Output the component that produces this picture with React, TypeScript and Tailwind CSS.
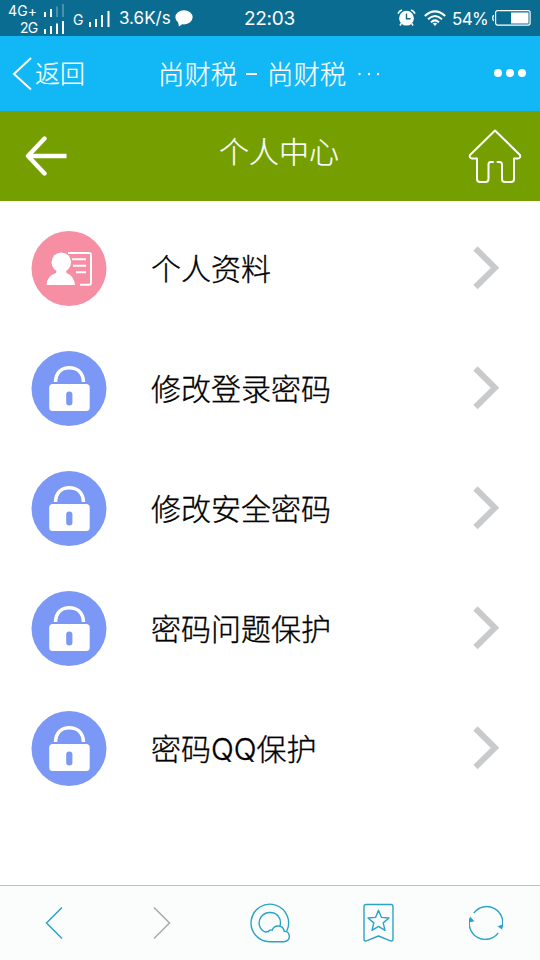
import React from 'react';

function SignalBars({ faded = false }: { faded?: boolean }) {
  return (
    <svg width="20" height="13" viewBox="0 0 20 13" fill="#fff" className="shrink-0">
      <rect x="0" y="8" width="2" height="5" />
      <rect x="6" y="5" width="2" height="8" />
      <rect x="12" y="2.5" width="2" height="10.5" opacity={faded ? 0.25 : 1} />
      <rect x="18" y="0" width="2" height="13" opacity={faded ? 0.25 : 1} />
    </svg>
  );
}

function StatusBar() {
  return (
    <div className="flex h-9 shrink-0 items-center bg-[#0b6c92] font-normal text-white">
      <div className="flex w-[64px] flex-col gap-px pl-2 pt-0.5 text-[14px] leading-4">
        <div className="flex items-center justify-between">
          <span className="tracking-[0.1px]">4G+</span>
          <SignalBars faded />
        </div>
        <div className="flex items-center justify-between pl-3">
          <span className="tracking-[-0.8px]">2G</span>
          <SignalBars />
        </div>
      </div>
      <span className="ml-[9px] w-[16px] pt-1 text-[14px] leading-4">G</span>
      <svg width="21" height="16" viewBox="0 0 21 16" fill="#fff" className="mt-0.5 shrink-0">
        <rect x="0" y="11" width="2" height="5" />
        <rect x="6" y="8" width="2" height="8" />
        <rect x="12" y="4" width="2" height="12" />
        <rect x="18.5" y="0" width="2" height="16" />
      </svg>
      <span className="ml-[9px] w-[56px] whitespace-nowrap text-[17px] leading-5">3.6K/s</span>
      <svg width="18" height="17" viewBox="0 0 18 17" fill="#fff" className="shrink-0">
        <ellipse cx="9" cy="7.3" rx="8.6" ry="7.1" />
        <path d="M3 12 L4 16.5 L9 13Z" />
      </svg>
      <span className="ml-[51px] w-[52px] whitespace-nowrap pt-0.5 text-[19px] leading-5 tracking-[-0.3px]">22:03</span>
      <svg width="19" height="18" viewBox="0 0 19 18" className="ml-[101px] shrink-0">
        <circle cx="9.5" cy="9.2" r="7.4" fill="#fff" />
        <path d="M1 4.6Q2 2 5 1M14 1Q17 2 18 4.6M4.2 14.5L3 16.5M14.8 14.5L16 16.5" stroke="#fff" strokeWidth="1.6" fill="none" />
        <path d="M9.5 4.5V9.7H13.5" stroke="#0b6c92" strokeWidth="1.4" fill="none" />
      </svg>
      <svg width="22" height="17" viewBox="0 0 22 17" fill="none" stroke="#fff" strokeWidth="2" className="ml-2 shrink-0">
        <path d="M0.8 6Q11-3.2 21.2 6M4 9.3Q11 2.7 18 9.3M7 12.4Q11 8.4 15 12.4" />
        <path d="M8.8 13.5Q11 11.8 13.2 13.5L11 16Z" fill="#fff" stroke="none" />
      </svg>
      <span className="ml-1.5 w-[40px] whitespace-nowrap pt-0.5 text-[17px] leading-5 tracking-[-0.7px]">54%</span>
      <svg width="39" height="18" viewBox="0 0 39 18" className="shrink-0">
        <path d="M2 6.5Q0.8 6.5.8 9T2 11.5" fill="none" stroke="#fff" strokeWidth="1.3" />
        <rect x="3.6" y="1.6" width="34.5" height="14.5" rx="2" fill="none" stroke="#fff" strokeWidth="1.2" />
        <rect x="19" y="3.5" width="17.5" height="11" fill="#fff" />
      </svg>
    </div>
  );
}

function NavBar() {
  return (
    <div className="flex h-[75px] shrink-0 items-center bg-[#12b7f5] font-light text-white [-webkit-text-stroke:0.2px_currentColor]">
      <svg width="20" height="34" viewBox="0 0 20 34" fill="none" stroke="#fff" strokeWidth="2" className="ml-3">
        <path d="M19 1L2 17L19 32.5" />
      </svg>
      <span className="ml-[3px] w-[50px] text-[25px] leading-8">返回</span>
      <div className="ml-[73px] flex w-[226px] items-center whitespace-nowrap text-[26.4px] leading-8">
        <span className="w-[88px]">尚财税</span>
        <span className="h-[2px] w-[11px] bg-white" />
        <span className="ml-[10px]">尚财税</span>
        <svg width="22" height="4" viewBox="0 0 22 4" fill="#fff" className="ml-3">
          <circle cx="1.5" cy="2" r="1.2" />
          <circle cx="11" cy="2" r="1.2" />
          <circle cx="20" cy="2" r="1.2" />
        </svg>
      </div>
      <svg width="32" height="8" viewBox="0 0 32 8" fill="#fff" className="mb-0.5 ml-[110px] shrink-0">
        <circle cx="4" cy="4" r="4" />
        <circle cx="16" cy="4" r="4" />
        <circle cx="28" cy="4" r="4" />
      </svg>
    </div>
  );
}

function PageHeader() {
  return (
    <div className="flex h-[90px] shrink-0 items-start bg-[#759e00] text-white">
      <svg width="42" height="40" viewBox="0 0 42 40" fill="none" stroke="#fff" strokeWidth="4.4" className="ml-[25px] mt-[25px]">
        <path d="M19.5 2.5L3 20L19.5 37.5" strokeLinecap="round" strokeLinejoin="round" />
        <path d="M4 20H41.5" />
      </svg>
      <h1 className="ml-[152px] mt-[21px] w-[120px] whitespace-nowrap text-[30px] font-light leading-10 [-webkit-text-stroke:0.2px_currentColor]">个人中心</h1>
      <svg width="54" height="56" viewBox="0 0 54 56" fill="none" stroke="#fff" strokeWidth="2" strokeLinejoin="round" strokeLinecap="round" className="ml-[129px] mt-[17px]">
        <path d="M25 34H22.5Q20.5 34 20.5 36.5V51Q20.5 54 17.5 54H12Q9 54 9 51V30.5H4Q1 30 2 27L27 2.5L52 27Q53 30 50 30.5H46V51Q46 54 43 54H37Q34 54 34 51V36.5Q34 34 31.5 34H29.5" />
      </svg>
    </div>
  );
}

function ProfileIcon() {
  return (
    <svg width="76" height="76" viewBox="0 0 76 76" className="shrink-0">
      <circle cx="38" cy="37.5" r="37.5" fill="#f78fa4" />
      <circle cx="30.3" cy="31.3" r="9.8" fill="#fff" />
      <path d="M26 38L25 42Q16 44.5 15.5 54H44Q43 44.5 35.5 42L35 38Z" fill="#fff" />
      <path d="M37 22H58Q60 22 60 24V52Q60 53.7 58 53.7H49" fill="none" stroke="#fff" strokeWidth="2" />
      <path d="M41 28.3H55M42 34.7H55M45 41.3H55" fill="none" stroke="#fff" strokeWidth="2" />
    </svg>
  );
}

function LockIcon() {
  return (
    <svg width="76" height="76" viewBox="0 0 76 76" className="shrink-0">
      <circle cx="38" cy="37.5" r="37.5" fill="#7b98f6" />
      <path d="M24.5 31C25 21 31 16.7 38.3 16.7S52 21 52.5 31" fill="none" stroke="#fff" strokeWidth="3.6" />
      <rect x="18.2" y="33" width="40.5" height="27" rx="3.5" fill="#fff" />
      <rect x="35.2" y="40.5" width="6.2" height="14" rx="3" fill="#7b98f6" />
    </svg>
  );
}

const items = ['个人资料', '修改登录密码', '修改安全密码', '密码问题保护', '密码QQ保护'];

function MenuList() {
  return (
    <div className="flex grow flex-col gap-[45px] bg-white pt-[30px]">
      {items.map((label, i) => (
        <div key={label} className="flex h-[75px] items-center">
          <div className="ml-[31px] h-[75px] w-[76px]">{i === 0 ? <ProfileIcon /> : <LockIcon />}</div>
          <span className="ml-11 w-[322px] whitespace-nowrap text-[30px] font-light leading-10 text-black [-webkit-text-stroke:0.35px_currentColor]">{label}</span>
          <svg width="26" height="44" viewBox="0 0 26 44" fill="none" stroke="#c8cacc" strokeWidth="6" className="mb-0.5">
            <path d="M2.5 2.5L22 21.8L2.5 41" />
          </svg>
        </div>
      ))}
    </div>
  );
}

function BottomBar() {
  return (
    <div className="flex h-[75px] shrink-0 border-t border-[#bfbfc1] bg-[#fbfdfd] text-[#2ba3c7]">
      <div className="flex flex-1 items-center justify-center">
        <svg width="18" height="34" viewBox="0 0 18 34" fill="none" stroke="currentColor" strokeWidth="1.5">
          <path d="M17 1.5L1.5 17L17 32.5" />
        </svg>
      </div>
      <div className="flex flex-1 items-center justify-center">
        <svg width="18" height="34" viewBox="0 0 18 34" fill="none" stroke="#aaa" strokeWidth="1.5">
          <path d="M1 1.5L16.5 17L1 32.5" />
        </svg>
      </div>
      <div className="flex flex-1 items-center justify-center">
        <svg width="40" height="40" viewBox="0 0 40 40" fill="none" stroke="currentColor" strokeWidth="1.4">
          <path d="M36.6 28.5A18.8 18.8 0 1 0 20 38.8H33.5C38 38.8 39.8 35.4 39.2 32.4C38.7 29.8 36.5 28.2 34.3 28.4C33.8 25 31.5 23 28 23C25 23 23 24.6 22.2 27.2C20.6 26.6 19 27.3 18.4 28.7C17.3 28.2 16.2 28.6 15.5 29.2C8.5 26.5 7.6 18.4 11.2 13.7C15.8 8 24.5 8.4 28.3 13.2C30.6 16.2 31 19.6 29.9 23.1" />
        </svg>
      </div>
      <div className="flex flex-1 items-center justify-center">
        <svg width="31" height="40" viewBox="0 0 31 40" fill="none" stroke="currentColor" strokeWidth="1.4" strokeLinejoin="round">
          <path d="M3 1.5H28Q30 1.5 30 3.5V36Q30 38.7 27.5 37.8L15.5 33L3.5 37.8Q1 38.7 1 36V3.5Q1 1.5 3 1.5Z" />
          <path d="M15.5 7.2L18.5 14.4L26 15L20.2 19.9L22 27.3L15.5 23.4L9 27.3L10.8 19.9L5 15L12.5 14.4Z" />
        </svg>
      </div>
      <div className="flex flex-1 items-center justify-center">
        <svg width="34" height="36" viewBox="0 0 34 36" fill="none" stroke="currentColor" strokeWidth="1.4">
          <path d="M4.8 8.2A16 16 0 0 1 33 22.5M29.2 27.8A16 16 0 0 1 1.2 13" />
          <path d="M1 11.5L5.5 16.2L0.8 17.2ZM33.3 24.8L28.5 21.2L33 19.8Z" fill="currentColor" stroke="none" />
        </svg>
      </div>
    </div>
  );
}

export default function App() {
  return (
    <div className="flex h-[960px] w-[540px] flex-col overflow-hidden bg-white font-['Inter','Noto_Sans_CJK_SC',sans-serif]">
      <StatusBar />
      <NavBar />
      <PageHeader />
      <MenuList />
      <BottomBar />
    </div>
  );
}
